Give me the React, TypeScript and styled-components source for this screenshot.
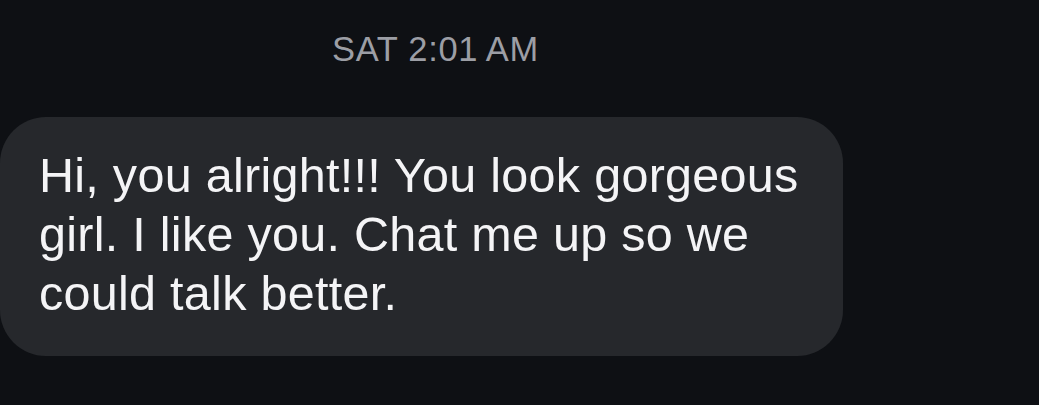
import styled, { createGlobalStyle } from "styled-components";

const GlobalStyle = createGlobalStyle`
  html, body {
    margin: 0;
    padding: 0;
    background: #0e1014;
  }
`;

const Screen = styled.div`
  width: 1039px;
  height: 405px;
  overflow: hidden;
  background: #0e1014;
  font-family: "Liberation Sans", Arial, sans-serif;
  display: flex;
  flex-direction: column;
`;

const Timestamp = styled.div`
  padding: 29px 168px 0 0;
  height: 40px;
  line-height: 40px;
  font-size: 34.5px;
  color: #9c9ea5;
  text-align: center;
  letter-spacing: 0.7px;
`;

const Thread = styled.div`
  display: flex;
  flex-direction: column;
  align-items: flex-start;
  padding-top: 48px;
`;

const Bubble = styled.div`
  width: 843px;
  box-sizing: border-box;
  padding: 29px 30px 33px 39px;
  background: #26282c;
  border-radius: 46px;
  color: #f4f4f6;
  font-size: 48.5px;
  line-height: 59px;
  letter-spacing: 0.28px;
`;

export default function App() {
  return (
    <>
      <GlobalStyle />
      <Screen>
        <Timestamp>SAT 2:01{"\u202F"}AM</Timestamp>
        <Thread>
          <Bubble>
            Hi, you alright!!! You look gorgeous girl. I like you. Chat me up so we could talk better.
          </Bubble>
        </Thread>
      </Screen>
    </>
  );
}
